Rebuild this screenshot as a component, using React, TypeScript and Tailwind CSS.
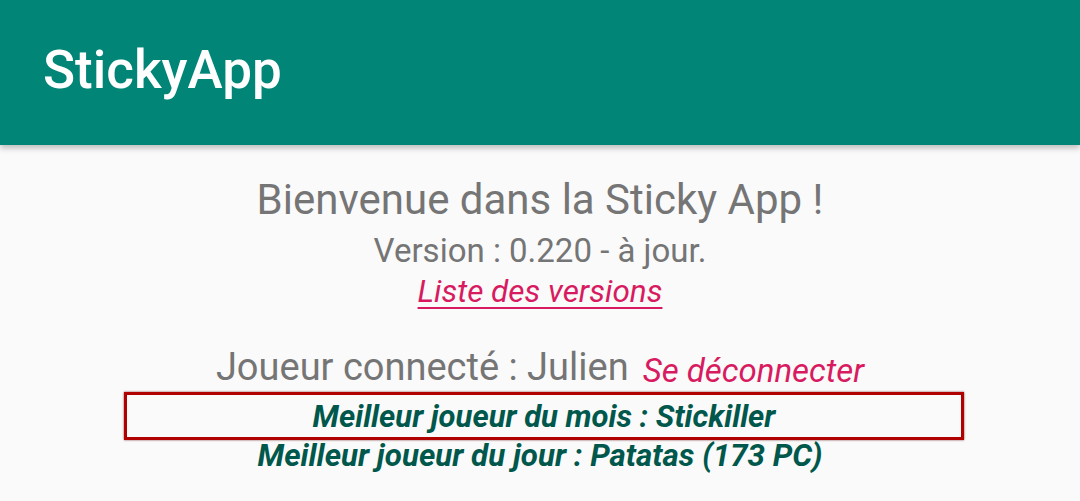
export default function App() {
  return (
    <div className="w-[1080px] h-[501px] overflow-hidden bg-[#fafafa]" style={{ fontFamily: 'Roboto, "Noto Sans", sans-serif' }}>
      <header className="relative h-[145px] bg-[#008577] shadow-[0_3px_6px_rgba(0,0,0,0.25)] flex items-center pl-[43px]">
        <h1 className="text-white text-[53px] font-medium leading-none -mt-[4px]">StickyApp</h1>
      </header>

      <main className="flex flex-col items-center pt-[32px]">
        <p className="text-[#757575] text-[42px] leading-[45px]">Bienvenue dans la Sticky App !</p>
        <p className="text-[#757575] text-[33px] leading-[36px] mt-[11px]">Version : 0.220 - à jour.</p>
        <a className="text-[#d81b60] text-[31.5px] leading-[36px] mt-[5px] italic underline underline-offset-[5px] decoration-[2px]">
          Liste des versions
        </a>

        <div className="flex items-baseline gap-[14px] mt-[35px] h-[45px]">
          <span className="text-[#757575] text-[38px] leading-[45px]">Joueur connecté : Julien</span>
          <span className="text-[#d81b60] text-[33px] leading-[36px] italic translate-y-[2px]">Se déconnecter</span>
        </div>

        <div className="self-start ml-[124px] mt-[2px] w-[840px] h-[48px] border-[3px] border-[#b00000] shadow-[0_0_2px_rgba(80,0,0,0.7)] flex items-center justify-center">
          <span className="text-[#00574b] text-[31px] font-bold italic leading-none">Meilleur joueur du mois : Stickiller</span>
        </div>
        <p className="text-[#00574b] text-[31.3px] font-bold italic leading-[32px]">Meilleur joueur du jour : Patatas (173 PC)</p>
      </main>
    </div>
  );
}
